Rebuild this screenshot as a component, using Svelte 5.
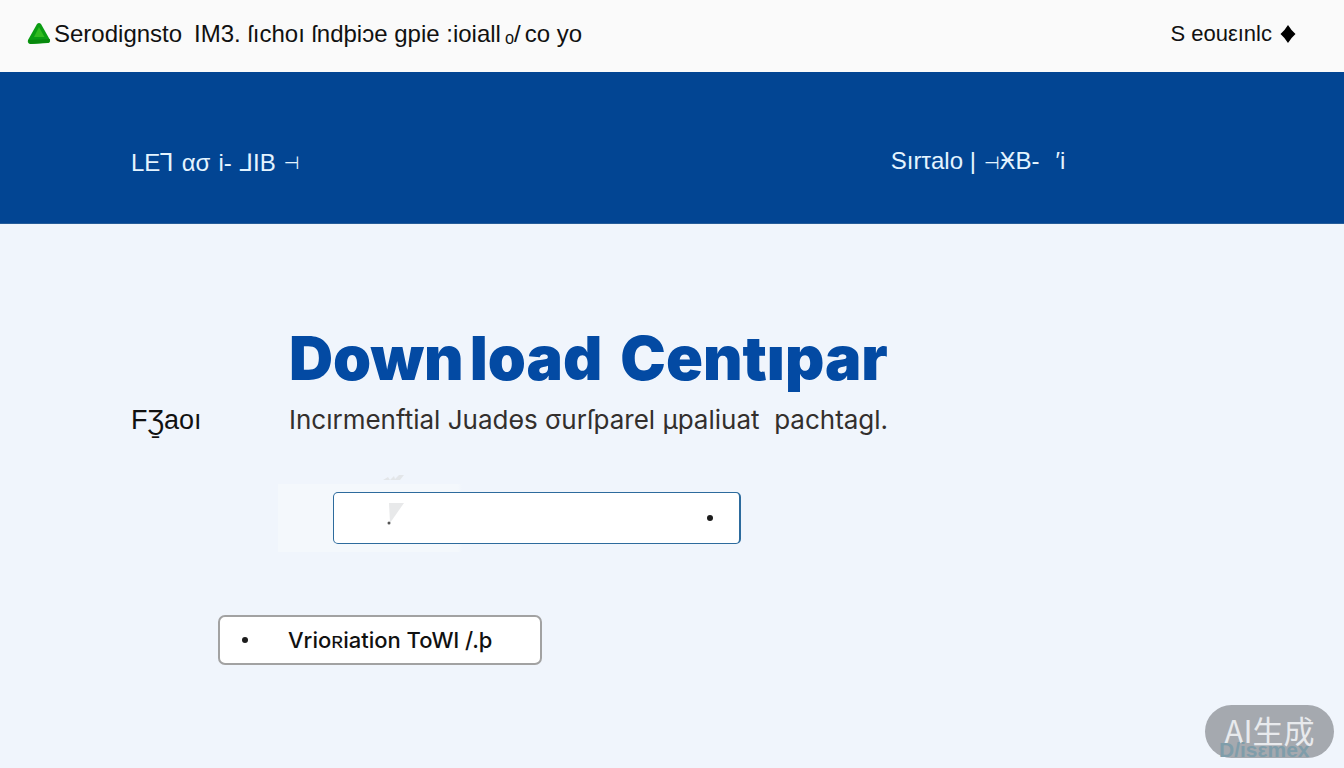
<script>
  let query = $state('');
</script>

<div class="page">
  <header class="topbar">
    <a class="brand" href="#home">
      <svg class="logo" viewBox="0 0 24 24" aria-hidden="true">
        <path d="M10 2Q12 0 14 2L23 18Q23.500 20.500 21 21L4 22Q0 22 1 18Z" fill="#0b9d13" />
        <path d="M12 5L17.500 15H7Z" fill="#31bb20" />
        <path d="M1 18L23 17L22 20.500L3 22Z" fill="#08890d" />
      </svg>
      <span class="name">Serodignsto</span>
      <span>IM3. ſıchoı ſndþiɔe gpie :ioiall</span>
      <span class="slash">ₒ/</span>
      <span>co yo</span>
    </a>
    <a class="account" href="#account">
      <span>S eouεınlc</span>
      <svg class="diamond" viewBox="0 0 16 18" aria-hidden="true">
        <path d="M8 0Q11 5 15.500 9Q11 13 8 18Q5 13 .5 9Q5 5 8 0Z" fill="#000" />
      </svg>
    </a>
  </header>

  <nav class="band" aria-label="Sections">
    <a href="#first"><span>LEꓶ</span><span>ασ</span><span>i‐</span><span>⅃IB</span><span class="tack">⊣</span></a>
    <a href="#second"><span>Sırτalo |</span><span><span class="tack">⊣</span>ӾB‐</span><span class="end">′i</span></a>
  </nav>

  <main>
    <div class="intro">
      <label class="side" for="query">FƷ̱aoı</label>
      <div class="titles">
        <h1><span>Down</span><span>load</span><span class="last">Centıpar</span></h1>
        <p>Incırmenftial Juadɵs σurſparel µpaliuat&nbsp; pachtagl.</p>
      </div>
    </div>

    <div class="search">
      <input id="query" type="text" bind:value={query} />
      <svg class="ghost" viewBox="0 0 24 54" aria-hidden="true">
        <path d="M1 6L6 3L8 6L12 2L13 5L17 1L22 1L18 6Z" fill="#e3e6e9" />
        <path d="M7 29H22L8 49Z" fill="#e8e9ea" />
        <circle cx="7" cy="49" r="1.500" fill="#555" />
      </svg>
      <span class="dot mark"></span>
    </div>

    <button type="button">
      <span class="dot"></span>
      <span>Vrioʀiation ToWl /.þ</span>
    </button>
  </main>

  <aside class="badge">
    <span>AI生成</span>
    <small>D/isεmex</small>
  </aside>
</div>

<style>
  :global(body) {
    margin: 0;
    background: #f0f5fc;
  }
  .page {
    position: relative;
    min-height: 100vh;
    font-family: "Liberation Sans", "DejaVu Sans", sans-serif;
    color: #111;
  }
  a {
    color: inherit;
    text-decoration: none;
  }
  .topbar {
    display: flex;
    justify-content: space-between;
    align-items: center;
    height: 72px;
    padding: 0 48px 4px 27px;
    box-sizing: border-box;
    background: #fafafa;
    font-size: 24px;
  }
  .brand,
  .account {
    display: flex;
    align-items: center;
    white-space: pre;
  }
  .name {
    margin-right: 12px;
  }
  .logo {
    width: 24px;
    height: 24px;
    margin-right: 3px;
  }
  .slash {
    margin: 0 4px;
  }
  .account {
    gap: 8px;
    font-size: 22px;
  }
  .diamond {
    width: 16px;
    height: 18px;
  }
  .band {
    display: grid;
    grid-template-columns: 3fr 2fr;
    align-items: end;
    height: 152px;
    padding: 0 0 0 131px;
    box-sizing: border-box;
    background: #024593;
    border-bottom: 1px solid #255c99;
    color: #e4f4ff;
    font-size: 24px;
    line-height: 28px;
  }
  .band a {
    display: flex;
    gap: 8px;
    padding-bottom: 46px;
    white-space: nowrap;
  }
  .band a + a {
    margin-left: 32px;
  }
  .tack {
    font-size: 18px;
  }
  .end {
    margin-left: 8px;
  }
  main {
    padding: 104px 131px 40px;
  }
  .intro {
    display: grid;
    grid-template-columns: 158px 1fr;
    align-items: end;
  }
  .side {
    font-size: 27px;
    line-height: 32px;
  }
  h1 {
    display: flex;
    gap: 6px;
    margin: 0;
    color: #034aa3;
    font: 900 61px/60px Inter, sans-serif;
  }
  .last {
    margin-left: 12px;
  }
  p {
    margin: 16px 0 0;
    color: #332f2d;
    font: 26px/32px Inter, sans-serif;
    white-space: nowrap;
  }
  .search {
    position: relative;
    display: flex;
    align-items: center;
    width: 463px;
    height: 68px;
    margin: 48px 0 0 147px;
    padding-left: 55px;
    box-sizing: border-box;
    background: linear-gradient(90deg, #f4f8fc 0 180px, transparent 184px);
  }
  input {
    width: 100%;
    height: 52px;
    padding: 0 48px 0 80px;
    box-sizing: border-box;
    border: 1px solid #2d6b9d;
    border-right: 2px solid #2d6b9d;
    border-radius: 5px;
    background: #fff;
    font: 24px "Liberation Sans", sans-serif;
  }
  .ghost {
    position: absolute;
    left: 104px;
    top: -10px;
    width: 24px;
    height: 54px;
    pointer-events: none;
  }
  .dot {
    flex: none;
    width: 6px;
    height: 6px;
    border-radius: 50%;
    background: #1c1c1c;
  }
  .mark {
    position: absolute;
    right: 28px;
    top: 31px;
  }
  button {
    display: flex;
    align-items: center;
    gap: 40px;
    width: 324px;
    height: 50px;
    margin: 63px 0 0 87px;
    padding: 0 22px;
    box-sizing: border-box;
    border: 2px solid #a2a2a2;
    border-radius: 7px;
    background: #fff;
    color: #111;
    font: 500 22px Inter, sans-serif;
    white-space: nowrap;
  }
  .badge {
    position: absolute;
    right: 10px;
    bottom: 10px;
    width: 129px;
    height: 53px;
    border-radius: 27px;
    background: #a5a9af;
    color: #e8eaed;
    font: 31px/49px "Noto Sans CJK SC", sans-serif;
    text-align: center;
  }
  small {
    position: absolute;
    left: 14px;
    bottom: -1px;
    color: #7f9daa;
    font: bold 21px/18px "Liberation Sans", sans-serif;
  }
</style>
